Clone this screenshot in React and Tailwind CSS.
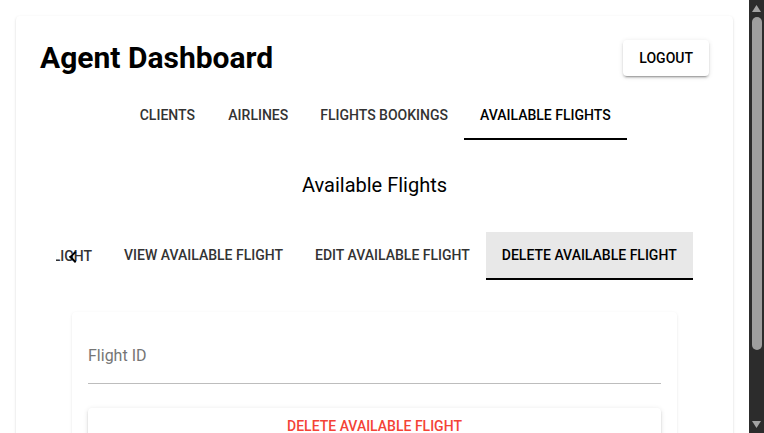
import React from "react";

const tabText = "text-[14px] font-medium uppercase leading-[24px]";

function NavTab({ label, active }) {
    return (
        <div
            className={`h-12 min-w-[90px] px-4 flex items-center justify-center border-b-2 ${tabText} ${active ? "border-black text-black" : "border-transparent text-[#333]"
                }`}
        >
            {label}
        </div>
    );
}

function SubTab({ label, active }) {
    return (
        <div
            className={`h-12 px-4 flex items-center justify-center shrink-0 border-b-2 ${tabText} ${active ? "bg-[#e8e8e8] border-black text-black" : "border-transparent text-[#333]"
                }`}
        >
            {label}
        </div>
    );
}

function Scrollbar() {
    return (
        <div className="w-[15px] shrink-0 bg-[#2c2c2c] flex flex-col items-center">
            <svg width="9" height="7" viewBox="0 0 9 7" className="mt-[5px]">
                <path d="M4.5 0L9 7H0z" fill="#a3a3a3" />
            </svg>
            <div className="mt-[5px] w-[10px] h-[333px] rounded-full bg-[#9f9f9f]" />
            <div className="flex-1" />
            <svg width="9" height="7" viewBox="0 0 9 7" className="mb-[5px]">
                <path d="M0 0H9L4.5 7z" fill="#a3a3a3" />
            </svg>
        </div>
    );
}

export default function App() {
    return (
        <div className="flex h-[433px] overflow-hidden bg-white font-['Roboto',sans-serif]">
            <div className="flex-1 min-w-0 px-4 pt-4">
                <div className="bg-white rounded shadow-[0_2px_1px_-1px_rgba(0,0,0,0.2),0_1px_1px_0_rgba(0,0,0,0.14),0_1px_3px_0_rgba(0,0,0,0.12)] px-6 pt-6 pb-10">
                    {/* Header */}
                    <div className="flex items-center justify-between h-9">
                        <h1 className="text-[30px] font-bold leading-9 text-black">Agent Dashboard</h1>
                        <button className="h-9 px-4 bg-white rounded text-[14px] font-medium text-black shadow-[0_3px_1px_-2px_rgba(0,0,0,0.2),0_2px_2px_0_rgba(0,0,0,0.14),0_1px_5px_0_rgba(0,0,0,0.12)]">
                            LOGOUT
                        </button>
                    </div>

                    {/* Main tabs */}
                    <div className="mt-[16px] flex justify-center">
                        <NavTab label="Clients" />
                        <NavTab label="Airlines" />
                        <NavTab label="Flights Bookings" />
                        <NavTab label="Available Flights" active />
                    </div>

                    <h2 className="mt-[29px] text-center text-[20px] leading-8 text-black">Available Flights</h2>

                    {/* Sub tabs */}
                    <div className="relative mt-[31px] pl-4 flex">
                        <div className="w-[52px] shrink-0 overflow-hidden flex justify-end">
                            <div className={`h-12 pr-4 flex items-center whitespace-nowrap shrink-0 ${tabText} text-[#333]`}>
                                Add Available Flight
                            </div>
                        </div>
                        <SubTab label="View Available Flight" />
                        <SubTab label="Edit Available Flight" />
                        <SubTab label="Delete Available Flight" active />
                        <svg
                            width="24"
                            height="24"
                            viewBox="0 0 24 24"
                            className="absolute left-[21px] top-[13px]"
                        >
                            <path d="M15.41 16.59L10.83 12l4.58-4.59L14 6l-6 6 6 6 1.41-1.41z" fill="#000" />
                        </svg>
                    </div>

                    {/* Form card */}
                    <div className="mt-8 mx-8 bg-white rounded shadow-[0_1px_3px_0_rgba(0,0,0,0.1)] p-4">
                        <div className="pt-4 pb-[15px] border-b border-[#bdbdbd]">
                            <div className="text-[16px] leading-6 text-[#757575]">Flight ID</div>
                        </div>
                        <button className="mt-6 w-full h-9 bg-white rounded text-[14px] font-medium text-[#f44336] shadow-[0_3px_1px_-2px_rgba(0,0,0,0.2),0_2px_2px_0_rgba(0,0,0,0.14),0_1px_5px_0_rgba(0,0,0,0.12)]">
                            DELETE AVAILABLE FLIGHT
                        </button>
                    </div>
                </div>
            </div>
            <Scrollbar />
        </div>
    );
}
